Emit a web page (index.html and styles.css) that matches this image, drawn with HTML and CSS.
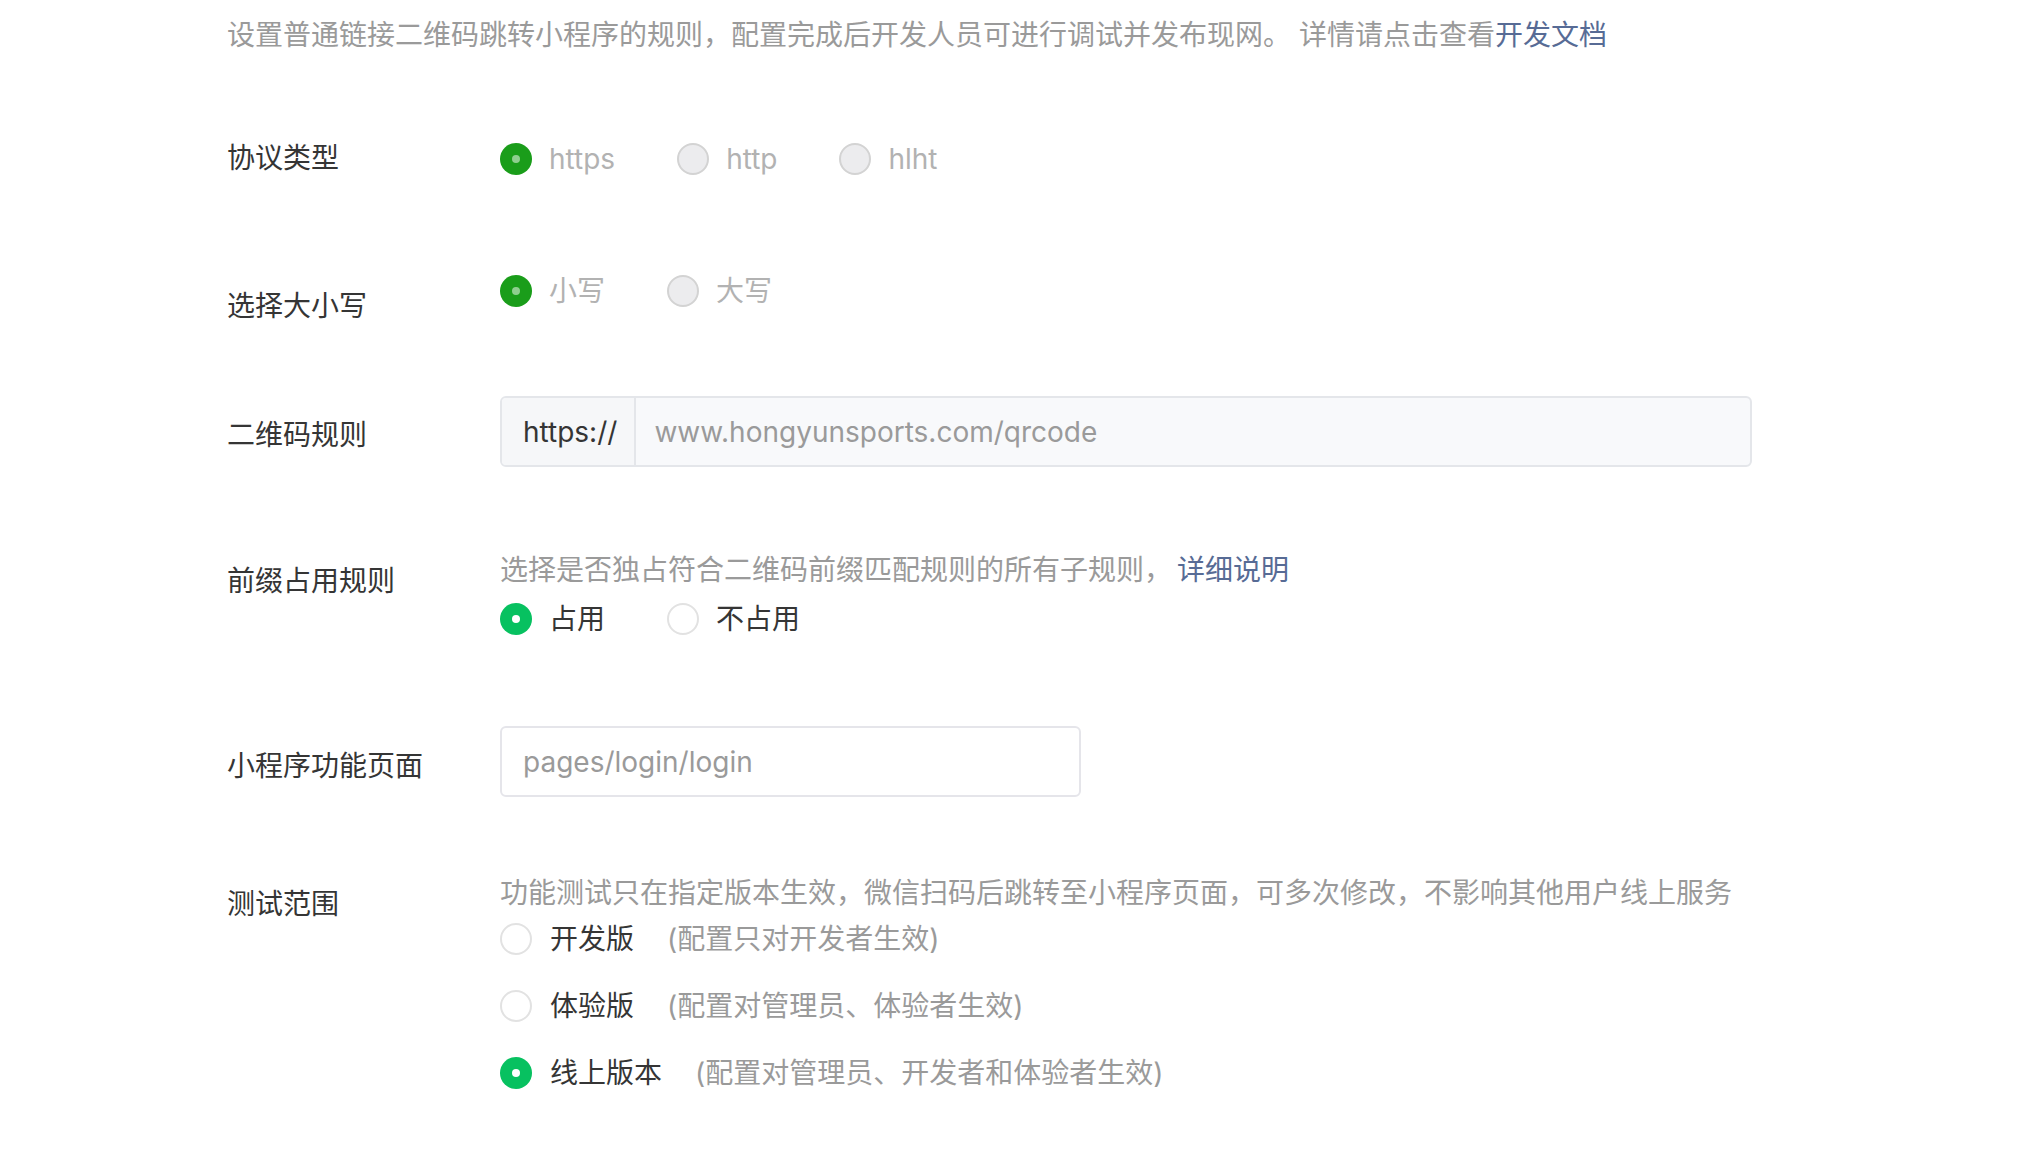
FILE: index.html
```html
<!DOCTYPE html>
<html lang="zh-CN">
<head>
<meta charset="utf-8">
<title>二维码规则</title>
<link rel="stylesheet" href="styles.css">
</head>
<body>
<div class="page">
  <p class="intro">设置普通链接二维码跳转小程序的规则，配置完成后开发人员可进行调试并发布现网。 详情请点击查看<a class="link" href="#">开发文档</a></p>

  <div class="row row-protocol">
    <div class="label">协议类型</div>
    <div class="field">
      <div class="options">
        <span class="opt"><span class="radio radio-dis-on"></span><span class="opt-text dim">https</span></span>
        <span class="opt"><span class="radio radio-dis-off"></span><span class="opt-text dim">http</span></span>
        <span class="opt"><span class="radio radio-dis-off"></span><span class="opt-text dim">hlht</span></span>
      </div>
    </div>
  </div>

  <div class="row row-case">
    <div class="label label-case">选择大小写</div>
    <div class="field">
      <div class="options">
        <span class="opt"><span class="radio radio-dis-on"></span><span class="opt-text dim">小写</span></span>
        <span class="opt"><span class="radio radio-dis-off"></span><span class="opt-text dim">大写</span></span>
      </div>
    </div>
  </div>

  <div class="row row-rule">
    <div class="label label-input">二维码规则</div>
    <div class="field">
      <div class="input-group">
        <span class="prefix">https://</span>
        <span class="input-text placeholder">www.hongyunsports.com/qrcode</span>
      </div>
    </div>
  </div>

  <div class="row row-prefix">
    <div class="label label-desc">前缀占用规则</div>
    <div class="field">
      <p class="desc">选择是否独占符合二维码前缀匹配规则的所有子规则，<a class="link link-desc" href="#">详细说明</a></p>
      <div class="options options-below">
        <span class="opt"><span class="radio radio-on"></span><span class="opt-text">占用</span></span>
        <span class="opt"><span class="radio radio-off"></span><span class="opt-text">不占用</span></span>
      </div>
    </div>
  </div>

  <div class="row row-page">
    <div class="label label-input">小程序功能页面</div>
    <div class="field">
      <div class="input-plain"><span class="placeholder">pages/login/login</span></div>
    </div>
  </div>

  <div class="row row-range">
    <div class="label label-desc">测试范围</div>
    <div class="field">
      <p class="desc">功能测试只在指定版本生效，微信扫码后跳转至小程序页面，可多次修改，不影响其他用户线上服务</p>
      <div class="range-list">
        <div class="range-item"><span class="radio radio-off"></span><span class="opt-text">开发版</span><span class="note">(配置只对开发者生效)</span></div>
        <div class="range-item"><span class="radio radio-off"></span><span class="opt-text">体验版</span><span class="note">(配置对管理员、体验者生效)</span></div>
        <div class="range-item"><span class="radio radio-on"></span><span class="opt-text">线上版本</span><span class="note">(配置对管理员、开发者和体验者生效)</span></div>
      </div>
    </div>
  </div>
</div>
</body>
</html>
```

FILE: styles.css
```css
* { box-sizing: border-box; }

html, body {
  margin: 0;
  padding: 0;
  background: #ffffff;
}

body {
  font-family: "Inter", "Noto Sans CJK SC", sans-serif;
  font-size: 28px;
  line-height: 40px;
  color: #353535;
}

.page {
  padding: 15px 0 0 227px;
  width: 2018px;
  height: 1150px;
  overflow: hidden;
}

p { margin: 0; }

.intro {
  color: #9a9a9a;
}

.link {
  color: #576b95;
  text-decoration: none;
}

.link-desc { margin-left: 5px; }

.row {
  display: flex;
  align-items: flex-start;
}

.label {
  width: 273px;
  flex: none;
  color: #353535;
}

.field {
  flex: none;
}

.row-protocol { margin-top: 83px; }
.row-protocol .options { padding-top: 2px; }

.row-case { margin-top: 93px; }
.label-case { padding-top: 15px; }

.row-rule { margin-top: 70px; }
.label-input { padding-top: 19px; }

.row-prefix { margin-top: 83px; }
.label-desc { padding-top: 11px; }

.row-page { margin-top: 87px; }
.row-page .label-input { padding-top: 20px; }

.row-range { margin-top: 76px; }

.desc { color: #9a9a9a; }

.options {
  display: flex;
  align-items: center;
  height: 40px;
}

.options-below { margin-top: 9px; }

.opt {
  display: flex;
  align-items: center;
  margin-right: 62px;
}

.opt-text { margin-left: 17px; }
.opt-text.dim { color: #b2b2b2; }

.radio {
  width: 32px;
  height: 32px;
  border-radius: 50%;
  flex: none;
  position: relative;
}

.radio-dis-on {
  background: #1a9d1a;
}
.radio-dis-on::after {
  content: "";
  position: absolute;
  left: 12px;
  top: 12px;
  width: 8px;
  height: 8px;
  border-radius: 50%;
  background: #8fcf8f;
}

.radio-dis-off {
  background: #ececee;
  border: 2px solid #d3d3d3;
}

.radio-on {
  background: #07c160;
}
.radio-on::after {
  content: "";
  position: absolute;
  left: 12px;
  top: 12px;
  width: 8px;
  height: 8px;
  border-radius: 50%;
  background: #ffffff;
}

.radio-off {
  background: #ffffff;
  border: 2px solid #e2e2e2;
}

.input-group {
  display: flex;
  width: 1252px;
  height: 71px;
  border: 2px solid #e4e6ea;
  border-radius: 6px;
  background: #f8f9fb;
  overflow: hidden;
}

.prefix {
  display: flex;
  align-items: center;
  padding: 0 17px 0 21px;
  color: #353535;
  border-right: 2px solid #e4e6ea;
  background: #f6f7f9;
}

.input-text {
  display: flex;
  align-items: center;
  padding-left: 18px;
}

.placeholder { color: #9a9a9a; }

.input-plain {
  display: flex;
  align-items: center;
  width: 581px;
  height: 71px;
  padding-left: 21px;
  border: 2px solid #e5e5ea;
  border-radius: 6px;
  background: #ffffff;
}

.range-list {
  display: flex;
  flex-direction: column;
  gap: 27px;
  margin-top: 6px;
}

.range-item {
  display: flex;
  align-items: center;
  height: 40px;
}

.range-item .opt-text { margin-left: 18px; }

.note {
  margin-left: 33px;
  color: #9a9a9a;
}
```
